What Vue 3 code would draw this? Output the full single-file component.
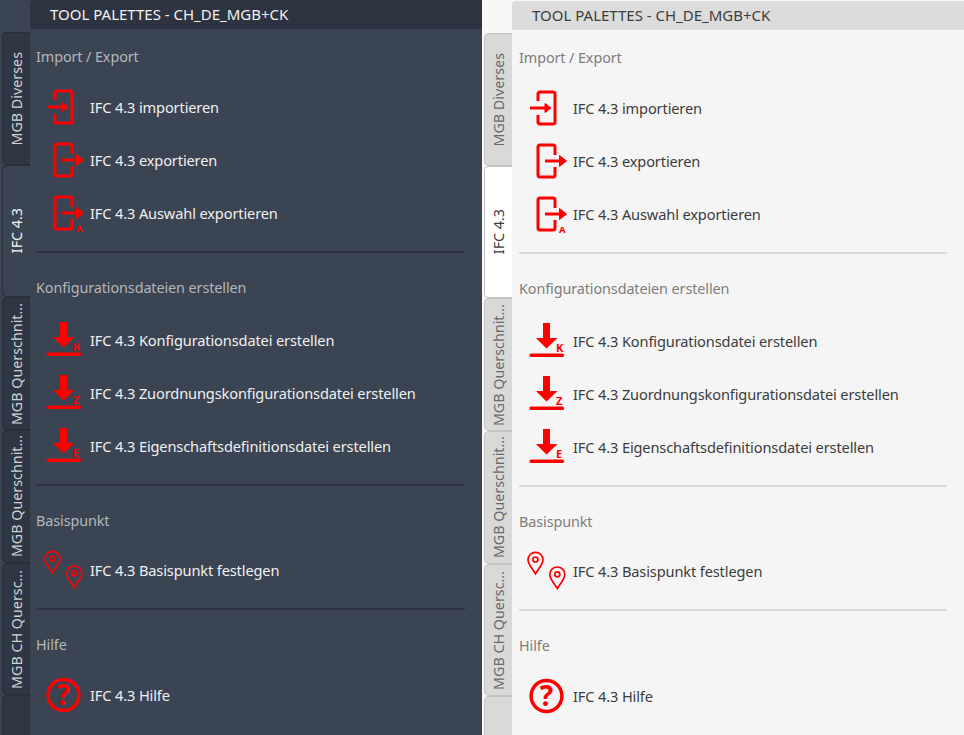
<template>
  <div class="page">
    <div v-for="pane in panes" :key="pane" class="palette" :class="pane">
      <div class="tabs">
        <div
          v-for="tab in tabs"
          :key="tab.label + tab.top"
          class="tab"
          :class="{ active: tab.active }"
        >
          <span class="tab-label">{{ tab.label }}</span>
        </div>
        <div class="tab tab-empty"></div>
      </div>

      <div class="main">
        <div class="title">TOOL PALETTES - CH_DE_MGB+CK</div>
        <div class="content">
          <section v-for="sec in sections" :key="sec.name" class="section">
            <div class="section-name">{{ sec.name }}</div>
            <div v-for="item in sec.items" :key="item.text" class="row">
              <svg class="icon" width="60" height="54" viewBox="0 0 60 54">
                <g v-if="item.icon === 'import'" fill="none" stroke="#f00" stroke-width="3">
                  <path d="M25 20v-7a2 2 0 0 1 2-2h13a2 2 0 0 1 2 2v28a2 2 0 0 1-2 2H27a2 2 0 0 1-2-2v-7" />
                  <path d="M17 27h17" />
                  <path d="M32 22.500l6 4.500-6 4.500z" fill="#f00" stroke-width="1" />
                </g>
                <g v-else-if="item.icon === 'export'" fill="none" stroke="#f00" stroke-width="3">
                  <path d="M42 21v-8a2 2 0 0 0-2-2H27a2 2 0 0 0-2 2v28a2 2 0 0 0 2 2h13a2 2 0 0 0 2-2v-8" />
                  <path d="M32 27h16" />
                  <path d="M46.500 21.500l7 5.500-7 5.500z" fill="#f00" stroke-width="1" />
                  <text v-if="item.mark" x="46" y="45.500" class="mark mark-small">{{ item.mark }}</text>
                </g>
                <g v-else-if="item.icon === 'down'" fill="#f00">
                  <path d="M30 9h7v15h7.500L33.500 34.500 23 24h7z" />
                  <rect x="16.500" y="39.500" width="34.500" height="3.500" rx="1.500" />
                  <text x="43" y="38" class="mark">{{ item.mark }}</text>
                </g>
                <g v-else-if="item.icon === 'pin'" fill="none" stroke="#f00" stroke-width="1.700">
                  <path d="M23 17a7.500 7.500 0 0 1 15 0c0 4.500-4.500 9-7.500 14-3-5-7.500-9.500-7.500-14z" transform="translate(-8 -1.200)" />
                  <circle cx="22.400" cy="15.500" r="2.500" />
                  <path d="M23 17a7.500 7.500 0 0 1 15 0c0 4.500-4.500 9-7.500 14-3-5-7.500-9.500-7.500-14z" transform="translate(13.800 13.500)" />
                  <circle cx="44.300" cy="30.300" r="2.500" />
                </g>
                <g v-else>
                  <circle cx="33.500" cy="27" r="15.400" fill="none" stroke="#f00" stroke-width="3.500" />
                  <text x="33.500" y="37" class="help">?</text>
                </g>
              </svg>
              <span class="row-text">{{ item.text }}</span>
            </div>
          </section>
        </div>
      </div>
    </div>
  </div>
</template>

<script setup>
const panes = ['dark', 'light']

const tabs = [
  { label: 'MGB Diverses', top: 0 },
  { label: 'IFC 4.3', top: 1, active: true },
  { label: 'MGB Querschnit...', top: 2 },
  { label: 'MGB Querschnit...', top: 3 },
  { label: 'MGB CH Quersc...', top: 4 },
]

const sections = [
  {
    name: 'Import / Export',
    items: [
      { icon: 'import', text: 'IFC 4.3 importieren' },
      { icon: 'export', text: 'IFC 4.3 exportieren' },
      { icon: 'export', mark: 'A', text: 'IFC 4.3 Auswahl exportieren' },
    ],
  },
  {
    name: 'Konfigurationsdateien erstellen',
    items: [
      { icon: 'down', mark: 'K', text: 'IFC 4.3 Konfigurationsdatei erstellen' },
      { icon: 'down', mark: 'Z', text: 'IFC 4.3 Zuordnungskonfigurationsdatei erstellen' },
      { icon: 'down', mark: 'E', text: 'IFC 4.3 Eigenschaftsdefinitionsdatei erstellen' },
    ],
  },
  {
    name: 'Basispunkt',
    items: [{ icon: 'pin', text: 'IFC 4.3 Basispunkt festlegen' }],
  },
  {
    name: 'Hilfe',
    items: [{ icon: 'help', text: 'IFC 4.3 Hilfe' }],
  },
]
</script>

<style>
html,
body {
  margin: 0;
  overflow: hidden;
}
</style>

<style scoped>
.page {
  display: flex;
  width: 964px;
  height: 735px;
  overflow: hidden;
  font-family: 'Noto Sans', 'Open Sans', sans-serif;
}

.palette {
  flex: 0 0 482px;
  display: flex;
  box-sizing: border-box;
  background: var(--strip);
}

.palette.dark {
  --strip: #3b4452;
  --bg: #3b4452;
  --title-bg: #2d3340;
  --title: #f2f2f2;
  --text: #f0f0f0;
  --head: #b4b7bc;
  --line: #2e343f;
  --tab: #2f3644;
  --tab-text: #d0d2d6;
  --tab-active: #3b4452;
  --tab-active-text: #f5f5f5;
  --tab-line: #282e3a;
}

.palette.light {
  --strip: #f8f8f8;
  --bg: #f5f5f5;
  --title-bg: #dcdcdc;
  --title: #3c3c3c;
  --text: #3c3c3c;
  --head: #7d7d7d;
  --line: #d9d9d9;
  --tab: #d9d9d9;
  --tab-text: #6a6a6a;
  --tab-active: #ffffff;
  --tab-active-text: #3c3c3c;
  --tab-line: #c4c4c4;
  padding-top: 1px;
}

.tabs {
  flex: 0 0 30px;
  box-sizing: border-box;
  padding: 32px 0 0 2px;
  display: flex;
  flex-direction: column;
}

.tab {
  height: 132.700px;
  flex: none;
  box-sizing: border-box;
  background: var(--tab);
  border: 1px solid var(--tab-line);
  border-right: none;
  border-radius: 5px 0 0 5px;
  display: flex;
  align-items: center;
  justify-content: center;
  color: var(--tab-text);
}

.tab.active {
  background: var(--tab-active);
  color: var(--tab-active-text);
}

.tab-empty {
  flex: 1;
  border-bottom: none;
  border-radius: 5px 0 0 0;
}

.tab-label {
  writing-mode: vertical-rl;
  transform: rotate(180deg);
  font-size: 14.300px;
  white-space: nowrap;
}

.main {
  flex: 1;
  min-width: 0;
  display: flex;
  flex-direction: column;
}

.title {
  height: 29px;
  flex: none;
  box-sizing: border-box;
  padding-left: 20px;
  line-height: 28px;
  font-size: 15px;
  color: var(--title);
  background: var(--title-bg);
  border-radius: 4px 0 0 0;
}

.content {
  flex: 1;
  box-sizing: border-box;
  padding: 16px 17px 0 6px;
  background: var(--bg);
}

.light .content {
  padding-left: 7px;
}

.section {
  border-bottom: 2px solid var(--line);
  padding-bottom: 11px;
  margin-bottom: 23px;
}

.section:last-child {
  border-bottom: none;
}

.section-name {
  height: 24px;
  line-height: 24px;
  margin-bottom: 11px;
  font-size: 14.400px;
  letter-spacing: -0.100px;
  color: var(--head);
}

.section:nth-child(2) .section-name {
  margin-bottom: 13px;
}

.row {
  display: flex;
  align-items: center;
  height: 53.300px;
  margin-left: -6px;
}

.icon {
  flex: none;
}

.row-text {
  font-size: 14.600px;
  letter-spacing: -0.130px;
  color: var(--text);
  white-space: nowrap;
}

.mark {
  fill: #f00;
  stroke: none;
  font-size: 11px;
  font-weight: 700;
}

.mark-small {
  font-size: 9.500px;
}

.help {
  fill: #f00;
  stroke: none;
  font-size: 28px;
  font-weight: 700;
  text-anchor: middle;
}
</style>
